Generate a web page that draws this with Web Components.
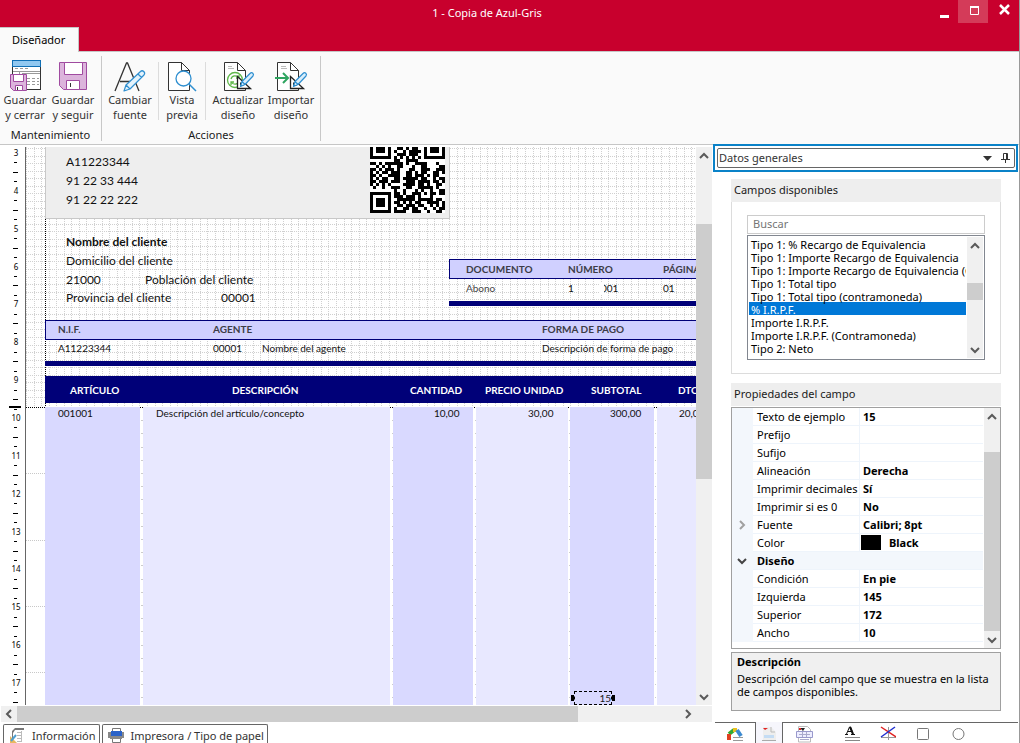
<!DOCTYPE html>
<html lang="es">
<head>
<meta charset="utf-8">
<title>1 - Copia de Azul-Gris</title>
<style>
  html, body { margin: 0; height: 100%; overflow: hidden; }
  body { font: 11px/15px "Noto Sans", "Open Sans", sans-serif; color: #1a1a1a; background: #fff; }
</style>
</head>
<body>
<app-window></app-window>

<script>
const BASE = '*{box-sizing:border-box}button{font:inherit;color:inherit;background:none;border:0;padding:0;margin:0}svg{display:block}';

function define(name, css, html, extra) {
  customElements.define(name, class extends HTMLElement {
    connectedCallback() {
      if (this.shadowRoot) return;
      const root = this.attachShadow({ mode: 'open' });
      root.innerHTML = `<style>${BASE}${css}</style>` + (typeof html === 'function' ? html(this) : html);
      if (extra) extra(this, root);
    }
  });
}

/* ---------- icons ---------- */
const PENCIL = '<path d="M10 31l2-6L26.500 11.500c2-2 5.500 1 3.500 3.500L16 29zM12 25l4 4M24 14l3.500 3.500" fill="#e4f3fc" stroke="#2f8fd0" stroke-width="1.200" stroke-linejoin="round"/>';
const SMALLPEN = '<path d="M18.500 26.500l1.500-5 8-8c2-2 4.500.5 3 2.500l-8 8.500zM20 21.500l3 3" fill="#d9eefb" stroke="#2f8fd0" stroke-width="1.200" stroke-linejoin="round"/>';
const PAGE = 'M2.500 2.500h13l8 8v20h-21z';
const ICONS = {
  saveclose: '<rect x="3.500" y="2.500" width="28" height="27" fill="#fff" stroke="#333"/><rect x="3.500" y=".5" width="28" height="6" fill="#91c8f0" stroke="#0f6fb5"/><path d="M6 8.500h3m2 0h3m2 0h3M4 11.500h27M10.500 12v3M13 13.500h18M18 18.500h3m2 0h3m2 0h2M18 21.500h3m2 0h3m2 0h2M18 24.500h3m2 0h3m2 0h2" stroke="#999" fill="none"/><path d="M1.500 14.500h16v16h-13l-3-3z" fill="#dcb4dc" stroke="#a04ba0"/><path d="M4.500 14.500h10v7h-10zM6.500 30.500v-5h7v5z" fill="#fff" stroke="#a04ba0"/><path d="M8.500 27v3" stroke="#333"/>',
  save: '<path d="M2.500 2.500h27v27h-23l-4-4z" fill="#dcb4dc" stroke="#a04ba0"/><path d="M7.500 2.500h18v12h-18zM9.500 29.500v-9h13v9z" fill="#fff" stroke="#a04ba0"/><path d="M13.500 23v4" stroke="#333"/>',
  font: '<path d="M1 31L12.500 3h1L25 31M6 21.500h14" fill="none" stroke="#333" stroke-width="1.300"/>' + PENCIL,
  preview: `<path d="${PAGE}" fill="#fff" stroke="#333"/><path d="M15.500 2.500v8h8z" fill="#fff" stroke="#333"/><circle cx="17.500" cy="18.500" r="7.500" fill="#fff" stroke="#2f8fd0" stroke-width="1.300"/><path d="M23 24l7 7" stroke="#2f8fd0" stroke-width="1.500"/>`,
  refresh: `<path d="${PAGE}" fill="#fff" stroke="#333"/><path d="M15.500 2.500v8h8" fill="none" stroke="#333"/><path d="M6 6.500h4M6 8.500h6" stroke="#bbb"/><g fill="none" stroke="#5fb84a" stroke-width="1.300"><circle cx="13" cy="20" r="7.500"/><path d="M9 19c1-4 6-4 8-1m0-3v3h-3M17 21c-1 4-6 4-8 1m0 3v-3h3"/></g><path d="M15.500 28.500v-12l13 12z" fill="#fff" stroke="#222" stroke-width="1.300"/><path d="M18 26v-4l4 4z" fill="#222"/>${SMALLPEN}`,
  importar: `<path d="${PAGE}" fill="#fff" stroke="#333"/><path d="M15.500 2.500v8h8" fill="none" stroke="#333"/><path d="M6 6.500h5M6 8.500h6" stroke="#bbb"/><path d="M0 18h13M8 13l5 5-5 5" fill="none" stroke="#2fa560" stroke-width="2"/><path d="M15.500 28.500v-12l13 12z" fill="#fff" stroke="#222" stroke-width="1.300"/><path d="M18 26v-4l4 4z" fill="#222"/>${SMALLPEN}`
};

/* ---------- title bar and ribbon ---------- */
define('title-bar', `
  :host{display:block;background:#c8002d;color:#fff;flex:none}
  .row{display:flex;height:27px;padding-right:1px}
  h1{flex:1;margin:0;padding-left:46px;text-align:center;font:inherit;line-height:26px}
  .ctl{width:30px;height:23px;display:grid;place-items:center}
  .max{background:#d43b59}
  nav{display:flex;position:relative;z-index:1;margin-bottom:-1px}
  nav button{height:25px;padding:0 13px 1px 12px;background:#fafafa;color:#000;border:solid #c6c6c6;border-width:1px 1px 0 0;width:79px;text-align:left}
`, `
  <div class="row"><h1>1 - Copia de Azul-Gris</h1>
    <button class="ctl" aria-label="Minimizar"><svg width="14" height="16"><path d="M4 11h9v3H4z" fill="#fff"/></svg></button>
    <button class="ctl max" aria-label="Maximizar"><svg width="14" height="16"><path d="M4.500 2.500h8v8h-8z" fill="none" stroke="#fff"/><path d="M4 2h9v2H4z" fill="#fff"/></svg></button>
    <button class="ctl" aria-label="Cerrar"><svg width="14" height="16"><path d="M4 1l9 9M13 1l-9 9" stroke="#fff" stroke-width="2.500"/></svg></button>
  </div>
  <nav><button>Diseñador</button></nav>`);

define('ribbon-button', `
  :host{display:block}
  button{width:100%;display:flex;flex-direction:column;align-items:center;color:#333;white-space:nowrap}
`, el => `<button><svg width="32" height="32" viewBox="0 0 32 32" overflow="visible">${ICONS[el.getAttribute('icon')]}</svg><span>${el.getAttribute('line1')}</span><span>${el.getAttribute('line2')}</span></button>`);

define('ribbon-group', `
  :host{display:flex;flex-direction:column;border-right:1px solid #c8c8c8}
  .items{display:flex;flex:1;padding:4px 1px 0 0}
  .cap{text-align:center;line-height:12px;color:#1a1a1a}
`, el => `<div class="items"><slot></slot></div><div class="cap">${el.getAttribute('label')}</div>`);

define('app-ribbon', `
  :host{display:flex;flex:none;background:#fafafa;border:solid #c6c6c6;border-width:1px 0;height:94px;padding:4px 0 3px;box-sizing:border-box}
  .w44{width:44px}.w46{width:46px}.w48{width:48px}.w56{width:56px}.w62{width:62px}
  .lead{margin-left:1px}
  .tail{margin-right:6px}
  .gap{width:3px}
  .sep{width:1px;height:58px;margin-top:2px;background:#dcdcdc}
`, `
  <ribbon-group label="Mantenimiento"><ribbon-button class="w48 lead" icon="saveclose" line1="Guardar" line2="y cerrar"></ribbon-button><ribbon-button class="w48" icon="save" line1="Guardar" line2="y seguir"></ribbon-button><span class="gap"></span></ribbon-group>
  <ribbon-group label="Acciones"><ribbon-button class="w56" icon="font" line1="Cambiar" line2="fuente"></ribbon-button><span class="sep"></span><ribbon-button class="w46" icon="preview" line1="Vista" line2="previa"></ribbon-button><span class="sep"></span><ribbon-button class="w62 lead" icon="refresh" line1="Actualizar" line2="diseño"></ribbon-button><ribbon-button class="w44 tail" icon="importar" line1="Importar" line2="diseño"></ribbon-button></ribbon-group>`);

/* ---------- scroll bar ---------- */
define('scroll-bar', `
  :host{display:flex;flex-direction:column;background:#f0f0f0;width:16px;flex:none}
  :host([horizontal]){flex-direction:row;width:auto;height:16px}
  button{width:16px;height:17px;display:grid;place-items:center;flex:none}
  :host([horizontal]) button{height:16px}
  .track{flex:1;display:flex;flex-direction:inherit}
  .thumb{background:#cdcdcd}
`, el => {
  const h = el.hasAttribute('horizontal');
  const a = d => `<svg width="10" height="10"><path d="${d}" fill="none" stroke="#5a5a5a" stroke-width="2"/></svg>`;
  const g = (k, v) => `<span style="flex:${el.getAttribute(k) || v} 0 0"></span>`;
  return `<button aria-label="Retroceder">${a(h ? 'M7 1L3 5l4 4' : 'M1 7l4-4 4 4')}</button><div class="track">${g('before', 0)}<span class="thumb" style="flex:${el.getAttribute('thumb')} 0 0"></span>${g('after', 0)}</div><button aria-label="Avanzar">${a(h ? 'M3 1l4 4-4 4' : 'M1 3l4 4 4-4')}</button>`;
});

/* ---------- ruler: centimetres with quarter ticks ---------- */
define('report-ruler', `
  :host{display:block;width:26px;flex:none;overflow:hidden;border-right:1px solid #666;box-sizing:border-box}
  text{font:8px "Noto Sans",sans-serif;fill:#000}
`, () => {
  let s = '';
  for (let n = 3; n <= 17; n++) {
    const y = 6 + (n - 3) * 37.86;
    s += `<text x="16" y="${Math.round(y + 3)}" text-anchor="middle">${n}</text>`;
    [1, 2, 3].forEach(q => {
      const t = Math.round(y + q * 9.45);
      if (t < 558) s += `<path d="M${q === 2 ? 13 : 14} ${t}.5h${q === 2 ? 5 : 3}" stroke="#000"/>`;
    });
  }
  return `<svg width="25" height="558">${s}<path d="M9 260h12" stroke="#000" stroke-width="2"/></svg>`;
});

/* ---------- objects placed on the report sheet ---------- */
define('report-field', `
  :host{position:absolute;white-space:pre;font:12px/16px Lato,"Open Sans",sans-serif;color:#111}
  :host([kind="small"]){font-size:10px;line-height:14px}
  :host([kind="cap"]){font-size:10px;line-height:14px;font-weight:700;color:#3c3c46}
  :host([kind="head"]){font-size:10px;line-height:14px;font-weight:700;color:#fff}
  :host([kind="name"]){font-weight:700}
`, '<slot></slot>', el => {
  el.style.left = el.getAttribute('x') + 'px';
  el.style.top = el.getAttribute('y') + 'px';
});

define('report-box', `:host{position:absolute}`, '<slot></slot>', el => {
  const [x, y, w, h] = el.getAttribute('rect').split(' ');
  Object.assign(el.style, { left: x + 'px', top: y + 'px', width: w === '*' ? 'auto' : w + 'px', height: h === '*' ? 'auto' : h + 'px', background: el.getAttribute('fill') });
  if (w === '*') el.style.right = '-1px';
  if (h === '*') el.style.bottom = '0';
  if (el.hasAttribute('line')) { el.style.border = '1px solid ' + el.getAttribute('line'); el.style.boxSizing = 'border-box'; }
});

const QR = [
  '#.###.#..##.#.##..#.###.#', '#.###.#.#..#.####.#.###.#', '#.....#..###.###..#.....#', '#######.#.#.#.#.#.#######',
  '........##..####.........', '##.#.######.#..####...#..', '..#.#.#..##...#..##....##', '##.#.###.#...##..###..###',
  '#.#.##.###..##.#.##..##.#', '##.#..####..##.###.#.##..', '#.#.##..##.#####.##..#.##', '##.###.###..###.####.##.#',
  '#.#.#.#....####.##.#..##.', '.#..#..###..##..#####.#..', '........#..#...#.#..#..##', '#######.##.#..###.#.##.##',
  '#.....#.###.###.#...#....', '#.###.#..######.#####.##.', '#.###.#.##.#.#.##..####.#', '#.###.#..##.###.##..#.#.#',
  '#.....#.#..##.##..#..#.##', '#######.####..###..#..##.'
];
define('qr-code', `:host{position:absolute;left:344px;top:0;width:75px;height:66px;background:#fff}`,
  () => `<svg width="75" height="66" viewBox="0 0 25 22" shape-rendering="crispEdges"><path d="${QR.map((r, y) => [...r].map((c, x) => c === '#' ? `M${x} ${y}h1v1h-1z` : '').join('')).join('')}"/></svg>`);

define('report-canvas', `
  :host{display:block;position:relative;flex:1;min-width:0;overflow:hidden;background:#fff}
  .grid{position:absolute;inset:0}
  .sel{position:absolute;left:548px;top:544px;width:38px;height:14px;border:1px dashed #000;text-align:right;font:10px/12px Lato,sans-serif}
  .sel::before,.sel::after{content:"";position:absolute;top:3px;width:3px;height:6px;background:#000}
  .sel::before{left:-4px}.sel::after{right:-4px}
`, () => {
  const f = (x, y, t, k) => `<report-field x="${x - 26}" y="${y - 155}" ${k ? `kind="${k}"` : ''}>${t}</report-field>`;
  const b = (x, y, w, h, c, l) => `<report-box rect="${x - 26} ${y - 147} ${w} ${h}" fill="${c}" ${l ? `line="${l}"` : ''}></report-box>`;
  let g = '';
  for (let i = 0; i < 130; i++) g += `M${Math.round(i * 7.56)}.5 0V260`;
  for (let i = 0; i < 34; i++) g += `M0 ${Math.round(1 + i * 7.56)}.5H2000`;
  let d = '';
  for (let i = 1; i < 24; i++) d += `M115 ${Math.round(260 + i * 13.2)}.5h2M366 ${Math.round(260 + i * 13.2)}.5h1M449 ${Math.round(260 + i * 13.2)}.5h1M543 ${Math.round(260 + i * 13.2)}.5h1M629 ${Math.round(260 + i * 13.2)}.5h1`;
  return `<svg class="grid" width="100%" height="100%"><path d="${g}" stroke="#d0d0d0" stroke-dasharray="1 1" fill="none"/>
    <path d="M0 326.500h19M0 393.500h19M0 459.500h19M0 525.500h19" stroke="#c8c8c8" stroke-dasharray="1 1"/><path d="${d}" stroke="#ccc"/>
    <path d="M19.500 72V260M0 260.500H2000" stroke="#000" stroke-dasharray="1 1"/></svg>`
    + b(45, 146, 405, 73, '#eee', '#c8c8c8') + '<qr-code></qr-code>'
    + f(66, 162, 'A11223344') + f(66, 181, '91 22 33 444') + f(66, 200, '91 22 22 222')
    + f(66, 242, 'Nombre del cliente', 'name') + f(66, 261, 'Domicilio del cliente') + f(66, 280, '21000') + f(145, 280, 'Población del cliente')
    + f(66, 298, 'Provincia del cliente') + f(221, 298, '00001')
    + b(449, 259, '*', 20, '#d0d0ff', '#000078') + f(466, 270, 'DOCUMENTO', 'cap') + f(568, 270, 'NÚMERO', 'cap') + f(663, 270, 'PÁGINA', 'cap')
    + f(466, 289, '<span style="color:#444">Abono</span>', 'small') + f(568, 289, '1', 'small') + f(601, 289, '001', 'small') + b(600, 283, 4, 12, '#fff') + f(663, 289, '01', 'small')
    + b(449, 301, '*', 5, '#000078')
    + b(45, 320, '*', 20, '#d0d0ff', '#000078') + f(58, 330, 'N.I.F.', 'cap') + f(213, 330, 'AGENTE', 'cap') + f(542, 330, 'FORMA DE PAGO', 'cap')
    + f(58, 349, 'A11223344', 'small') + f(213, 349, '00001', 'small') + f(262, 349, 'Nombre del agente', 'small') + f(542, 349, 'Descripción de forma de pago', 'small')
    + b(45, 361, '*', 5, '#000078') + b(45, 376, '*', 27, '#000078')
    + f(70, 391, 'ARTÍCULO', 'head') + f(232, 391, 'DESCRIPCIÓN', 'head') + f(410, 391, 'CANTIDAD', 'head') + f(485, 391, 'PRECIO UNIDAD', 'head') + f(591, 391, 'SUBTOTAL', 'head') + f(678, 391, 'DTO.', 'head')
    + b(45, 407, 95, '*', '#d9d9ff') + b(143, 407, 247, '*', '#e8e8ff') + b(393, 407, 80, '*', '#d9d9ff') + b(476, 407, 92, '*', '#e8e8ff') + b(570, 407, 84, '*', '#d9d9ff') + b(657, 407, '*', '*', '#e8e8ff')
    + f(58, 414, '001001', 'small') + f(156, 414, 'Descripción del artículo/concepto', 'small') + f(434, 414, '10,00', 'small') + f(528, 414, '30,00', 'small') + f(610, 414, '300,00', 'small') + f(679, 414, '20,00', 'small')
    + '<div class="sel">15</div>';
});

/* ---------- left workspace ---------- */
define('work-area', `
  :host{display:flex;flex-direction:column;flex:1;min-width:0;padding-top:2px;box-sizing:border-box}
  .view{display:flex;flex:1;min-height:0;padding-right:1px}
  scroll-bar[horizontal]{margin:1px 1px 0;padding-right:16px}
  .tabs{display:flex;gap:2px;padding:2px 0 0 3px;height:21px;overflow:hidden}
  .tabs button{display:flex;align-items:center;gap:7px;border:1px solid #666;border-bottom:0;border-radius:2px 2px 0 0;height:21px;padding:0 3px 0 5px;color:#333;white-space:nowrap;flex:none}
`, `
  <div class="view"><report-ruler></report-ruler><report-canvas></report-canvas><scroll-bar before="60" thumb="255" after="209"></scroll-bar></div>
  <scroll-bar horizontal thumb="559" after="102"></scroll-bar>
  <div class="tabs">
    <button><svg width="16" height="16"><path d="M14 1.500H5L3 3v9h10" fill="#fff"/><path d="M6 1h9v2H6L4 6v5H3V4z" fill="#777"/><path d="M8 5.500h4M8 8.500h4M8 11.500h4M12.500 4v10M8 14.500h5" stroke="#bbb"/><path d="M1 9l7 7H1z" fill="#e8b860"/><path d="M2 14l5-6" stroke="#4f9fd0" stroke-width="2"/></svg>Información</button>
    <button><svg width="16" height="16"><path d="M4.500 5V1.500h8V5M4.500 11v4.500h8V11" fill="#fff" stroke="#777"/><path d="M0 5h3v6H0zM14 5h2v6h-2z" fill="#888"/><path d="M2 8h12v4H2z" fill="#888"/><path d="M3 4h11v5H3z" fill="#2a62c8"/></svg>Impresora / Tipo de papel</button>
  </div>`);

/* ---------- right panel ---------- */
define('panel-picker', `
  :host{display:block;border:2px solid #0a82c8;padding:2px 1px 2px 2px;height:28px;background:#fff;margin:-1px 1px 0 0;position:relative;box-sizing:border-box}
  .in{display:flex;align-items:center;border:1px solid #666;border-radius:2px;height:20px}
  select{appearance:none;flex:1;border:0;padding:0 0 2px 1px;background:none;font:inherit;color:#333;height:18px;outline:0}
  .pin{width:17px;margin-left:5px;display:grid;place-items:center;height:18px}
`, `<div class="in"><select aria-label="Panel"><option>Datos generales</option></select><svg width="9" height="5"><path d="M0 0h9L4.500 5z" fill="#333"/></svg><button class="pin" aria-label="Fijar"><svg width="9" height="11"><path d="M2.500 6V.5h4V6M0 6.500h9M4.500 7v3" fill="none" stroke="#333"/><path d="M5 1h1v5H5z" fill="#333"/></svg></button></div>`);

define('field-list', `
  :host{display:block;border:1px solid #dcdcdc;border-top:0;padding:13px 15px}
  input{display:block;width:100%;height:19px;border:1px solid #ccc;padding:0 5px 2px;font:inherit;outline:0;margin:0 0 1px}
  input::placeholder{color:#757575;opacity:1}
  .list{display:flex;border:1px solid #828790;padding:1px;height:125px}
  select{flex:1;min-width:0;border:0;padding:0;margin:0;overflow:hidden;font:inherit;color:#000;outline:0;border-radius:0;background:#fff;scrollbar-width:none}
  option{height:13px;min-height:13px;line-height:11px;padding:0 0 2px 2px}
  option:checked{background:#0078d7 linear-gradient(#0078d7,#0078d7);-webkit-text-fill-color:#fff}
  scroll-bar{margin-left:1px}
`, `<input type="search" placeholder="Buscar" aria-label="Buscar">
  <div class="list"><select size="9" aria-label="Campos disponibles">
  <option>Tipo 1: % Recargo de Equivalencia</option><option>Tipo 1: Importe Recargo de Equivalencia</option><option>Tipo 1: Importe Recargo de Equivalencia (Contramoneda)</option><option>Tipo 1: Total tipo</option><option>Tipo 1: Total tipo (contramoneda)</option><option selected>% I.R.P.F.</option><option>Importe I.R.P.F.</option><option>Importe I.R.P.F. (Contramoneda)</option><option>Tipo 2: Neto</option><option>Tipo 2: Neto (Contramoneda)</option></select>
  <scroll-bar before="29" thumb="17" after="41"></scroll-bar></div>`);

const PROPS = [['Texto de ejemplo', '15'], ['Prefijo', ''], ['Sufijo', ''], ['Alineación', 'Derecha'], ['Imprimir decimales', 'Sí'], ['Imprimir si es 0', 'No'], ['Fuente', 'Calibri; 8pt', 1], ['Color', 'Black'], ['Diseño'], ['Condición', 'En pie'], ['Izquierda', '145'], ['Superior', '172'], ['Ancho', '10']];
define('property-grid', `
  :host{display:flex;border:1px solid #a0a0a0;height:242px;margin-top:1px;box-sizing:border-box}
  .body{flex:1;min-width:0;padding-right:1px}
  table{width:100%;border-collapse:separate;border-spacing:0;table-layout:fixed;color:#000}
  col.g{width:21px}col.n{width:106px}
  th,td{height:18px;padding:0 0 0 4px;line-height:17px;text-align:left;font-weight:400;white-space:nowrap;border-bottom:1px solid #eef4fb}
  td{font-weight:700;border-left:1px solid #eef4fb;padding-left:3px}
  td.g{background:#f3f7fc;border-color:#f3f7fc;border-left:0;padding:0 0 0 5px}
  .cat{background:#f3f7fc;font-weight:700}
  .sw{display:inline-block;width:20px;height:15px;background:#000;vertical-align:top;margin:1px 8px 0 -2px}
`, `<div class="body"><table><colgroup><col class="g"><col class="n"><col></colgroup>${PROPS.map(([n, v, x]) => v === undefined
  ? `<tr><td class="g"><svg width="10" height="8"><path d="M1 2l4 4 4-4" fill="none" stroke="#444" stroke-width="2"/></svg></td><th class="cat" colspan="2">${n}</th></tr>`
  : `<tr><td class="g">${x ? '<svg width="10" height="10"><path d="M3 1l4 4-4 4" fill="none" stroke="#a0a0a0" stroke-width="2"/></svg>' : ''}</td><th scope="row">${n}</th><td>${n === 'Color' ? '<span class="sw"></span>' : ''}${v}</td></tr>`).join('')}</table></div><scroll-bar before="27" thumb="179"></scroll-bar>`);

define('panel-section', `
  :host{display:block}
  h2{margin:0;height:23px;background:#eee;font:inherit;line-height:22px;padding-left:3px;color:#1a1a1a}
`, el => `<h2>${el.getAttribute('label')}</h2><slot></slot>`);

define('help-box', `
  :host{display:block;height:59px;margin-top:3px;background:#f0f0f0;border:1px solid #a0a0a0;padding:1px 5px;color:#000;box-sizing:border-box}
  h3{margin:0 0 3px;font:inherit;font-weight:700}
  p{margin:0;line-height:13px}
`, '<h3>Descripción</h3><p>Descripción del campo que se muestra en la lista<br>de campos disponibles.</p>');

define('tool-tabs', `
  :host{display:flex;height:21px;margin:0 1px 0 2px;overflow:hidden}
  button{flex:none;width:42px;border-top:1px solid #666;display:flex;justify-content:center;align-items:flex-start;padding-top:3px}
  button.on{width:28px;background:#f6f6fc;border:solid #666;border-width:0 1px;padding-top:4px}
  .w18{width:18px}.w40{width:40px}.w52{width:52px}.w54{width:54px}
  .rest{flex:1;border-top:1px solid #666}
`, `
  <button class="w40" aria-label="Datos"><svg width="18" height="18"><path d="M3 8l5-4" stroke="#3a3" stroke-width="4"/><path d="M7 4h4" stroke="#e8c020" stroke-width="4"/><path d="M11 4l4 6" stroke="#3c8ad0" stroke-width="4"/><path d="M3 14V8" stroke="#e04020" stroke-width="4"/><path d="M7 11.500h10M7 14.500h10" stroke="#999"/></svg></button>
  <button class="on" aria-label="Documento"><svg width="16" height="18"><path d="M2 1h8l5 5v8H2z" fill="#eee"/><path d="M10 1v5h4" fill="none" stroke="#bbb"/><path d="M2 2h5L4 4z" fill="#e02020"/><path d="M3 9h10v3H3z" fill="#c4dcf4"/><path d="M1 14.500h14" stroke="#aaa"/></svg></button>
  <button aria-label="Líneas"><svg width="17" height="18"><path d="M2.500.5h9l3 3V16h-12z" fill="#fff" stroke="#bbb"/><path d="M4 2h5L7 5z" fill="#222"/><path d="M3 2h2v2H3z" fill="#e02020"/><path d="M.5 5.500h16v6H.5z" fill="#eef" stroke="#99c"/><path d="M3 8.500h11M6.500 6v5M10.500 6v5M4 13.500h9" stroke="#aac"/></svg></button>
  <button class="w54" aria-label="Texto"><svg width="15" height="18"><path d="M1.500 8l3-7h1l2.500 7M3 5.500h4M0 8.500h3M6 8.500h4" fill="none" stroke="#111"/><path d="M5 1l3 7" stroke="#111" stroke-width="2"/><path d="M0 11.500h15M0 14.500h15" stroke="#888"/></svg></button>
  <button class="w18" aria-label="Línea"><svg width="16" height="18"><path d="M8.500 1v13M1 11.500h15" stroke="#999"/><path d="M1 1l15 10" stroke="#e02020" stroke-width="1.500"/><path d="M15 1L1 11" stroke="#2030d0" stroke-width="1.500"/></svg></button>
  <button class="w52" aria-label="Rectángulo"><svg width="13" height="18"><rect x=".5" y="2.500" width="11" height="11" rx="1" fill="none" stroke="#777"/></svg></button>
  <button class="w18" aria-label="Elipse"><svg width="13" height="18"><circle cx="6.500" cy="8" r="5.500" fill="none" stroke="#777"/></svg></button>
  <span class="rest"></span>`);

define('side-panel', `
  :host{display:flex;flex-direction:column;width:306px;flex:none}
  .body{flex:1;min-height:0;padding:7px 18px 0}
  panel-section{margin-bottom:9px}
`, `<panel-picker></panel-picker>
  <div class="body">
    <panel-section label="Campos disponibles"><field-list></field-list></panel-section>
    <panel-section label="Propiedades del campo"><property-grid></property-grid><help-box></help-box></panel-section>
  </div>
  <tool-tabs></tool-tabs>`);

define('app-window', `
  :host{display:flex;flex-direction:column;height:100vh;border-right:1px solid #999;box-sizing:border-box}
  main{flex:1;min-height:0;display:flex}
`, `<title-bar></title-bar><app-ribbon></app-ribbon><main><work-area></work-area><side-panel></side-panel></main>`);
</script>
</body>
</html>
